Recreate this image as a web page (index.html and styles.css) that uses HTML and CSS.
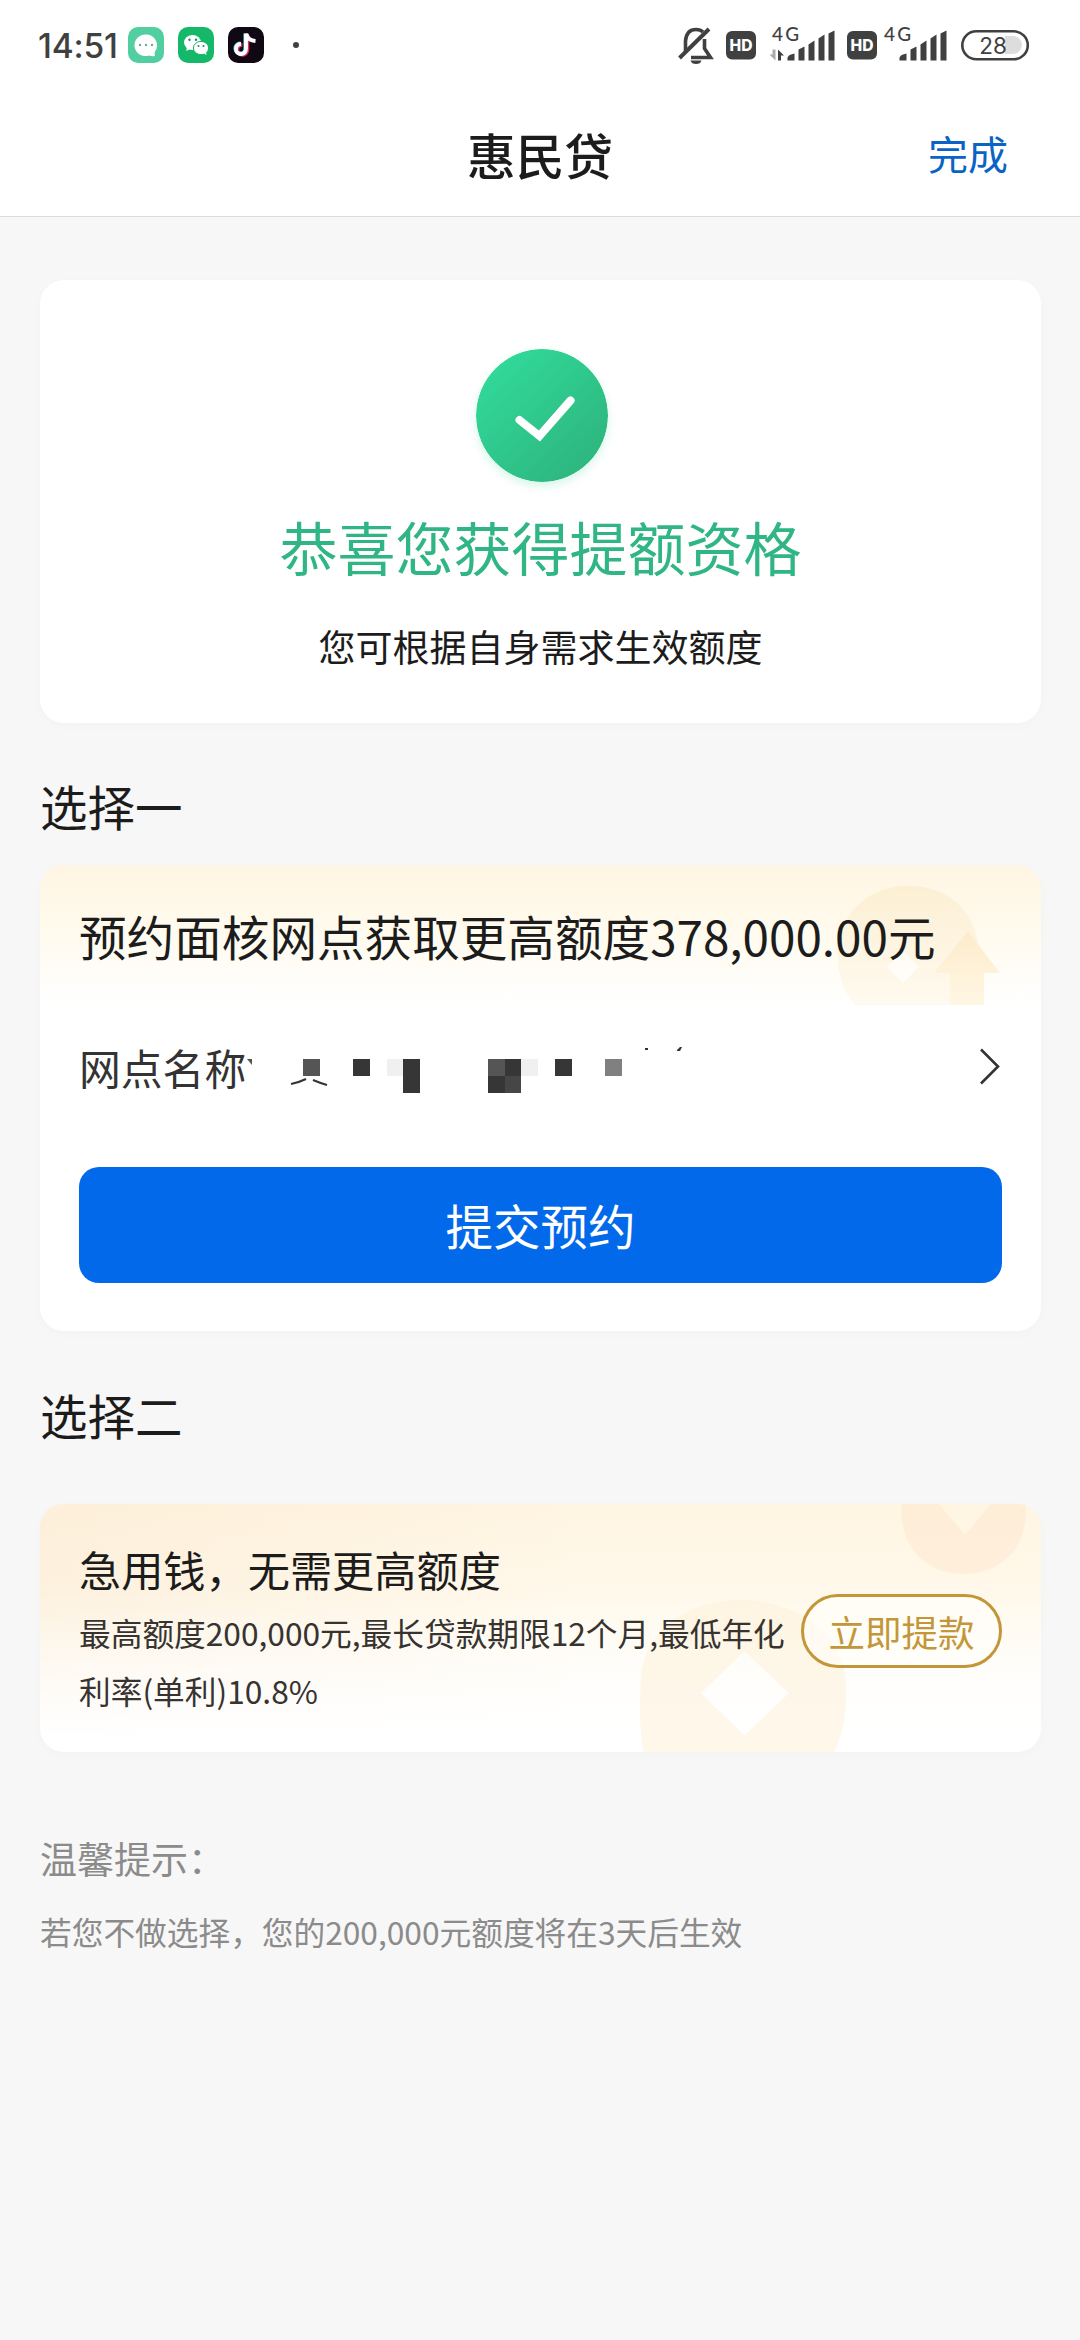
FILE: index.html
```html
<!DOCTYPE html>
<html lang="zh-CN">
<head>
<meta charset="utf-8">
<title>惠民贷</title>
<link rel="stylesheet" href="styles.css">
</head>
<body>
<div class="status">
  <span class="time">14:51</span>
  <svg class="app" viewBox="0 0 36 36"><rect width="36" height="36" rx="10" fill="#51cfa0"/><path d="M18 7.500a11 10.800 0 1 0 3 21q3 1 6 .5q-.8-2.500 0-4.500A11 10.800 0 0 0 18 7.500Z" fill="#fff"/><g fill="#6cab92"><circle cx="12" cy="18" r="1.200"/><circle cx="18" cy="18" r="1.200"/><circle cx="24" cy="18" r="1.200"/></g></svg>
  <svg class="app" viewBox="0 0 36 36"><rect width="36" height="36" rx="10" fill="#14b868"/><ellipse cx="14.500" cy="15.500" rx="8.500" ry="7.500" fill="#fff"/><path d="M9 20l-.8 4 4-2z" fill="#fff"/><ellipse cx="23" cy="21" rx="7.600" ry="6.600" fill="#fff" stroke="#14b868" stroke-width="1"/><path d="M25 26l3.500 2-.5-3.500z" fill="#fff"/><g fill="#14905a"><circle cx="11.500" cy="12.800" r="1.200"/><circle cx="18" cy="12.800" r="1.200"/><circle cx="20.500" cy="19" r="1"/><circle cx="25.500" cy="19" r="1"/></g></svg>
  <svg class="app" viewBox="0 0 36 36"><rect width="36" height="36" rx="10" fill="#100812"/><g fill="none" stroke-width="3.800"><path d="M18.500 7v15a5 5 0 1 1-5-5" stroke="#e72b62" transform="translate(.9 .8)"/><path d="M18 7v15a5 5 0 1 1-5-5" stroke="#6be9ef" transform="translate(-.6 -.5)"/><path d="M18 6.500v15.500a5 5 0 1 1-5-5M18.500 7q1.500 6.500 9 7" stroke="#fff"/></g></svg>
  <i class="more"></i>
  <svg class="sysicons" viewBox="0 0 360 48">
    <g fill="none" stroke="#404040">
      <path d="M11.500 32V20Q12.500 8.500 22 8.500q4.500 0 7 2.500M30.500 18v9.500l6 9H17" stroke-width="3.600"/>
      <path d="M5.500 37L35 8" stroke-width="4"/>
    </g>
    <path d="M16.500 39.500h11q-1 3.500-5.500 3.500t-5.500-3.500z" fill="#404040"/>
    <g fill="#404040" transform="translate(-1.500 1.500)">
      <rect x="53.500" y="8.500" width="30" height="28.500" rx="6"/>
      <rect x="174.500" y="8.500" width="30" height="28.500" rx="6"/>
      <path d="M115 38v-3q1-3 7-4v7zM126 38V27l6-3v14zM136 38V22l6-4v20zM146 38V16l6-4v26zM156 38V11l6-3v30z"/>
      <path d="M227 38v-3q1-3 7-4v7zM238 38V27l6-3v14zM248 38V22l6-4v20zM258 38V16l6-4v26zM268 38V11l6-3v30z"/>
      <path d="M105.500 38V27l6 6h-3v5z"/>
      <path d="M103 27v11l-6-6h3v-5z" fill="#aaa"/>
    </g>
    <g class="hd"><text x="67" y="30" textLength="23" lengthAdjust="spacingAndGlyphs">HD</text><text x="188" y="30" textLength="23" lengthAdjust="spacingAndGlyphs">HD</text></g>
    <g class="net"><text x="98" y="20" textLength="27">4G</text><text x="210" y="20" textLength="27">4G</text></g>
    <path d="M331 15h8a9 9 0 0 1 0 18h-8z" fill="#ddd"/>
    <rect x="288.300" y="10.300" width="65.500" height="28" rx="14" fill="none" stroke="#404040" stroke-width="2.600"/>
    <text class="pct" x="319" y="32.500">28</text>
  </svg>
</div>
<header class="nav"><span></span><h1>惠民贷</h1><a class="done">完成</a></header>
<main>
  <section class="card result">
    <svg class="tick" viewBox="0 0 132 133"><defs><linearGradient id="g" x1=".15" y1=".1" x2=".8" y2=".8"><stop offset="0" stop-color="#31d998"/><stop offset="1" stop-color="#2eb981"/></linearGradient></defs><ellipse cx="66" cy="66.500" rx="66" ry="66.500" fill="url(#g)"/><path d="M43.500 71L63.500 87L94.500 51.500" fill="none" stroke="#fff" stroke-width="8" stroke-linecap="round"/></svg>
    <h2>恭喜您获得提额资格</h2>
    <p>您可根据自身需求生效额度</p>
  </section>
  <h3 class="label">选择一</h3>
  <section class="card book">
    <svg class="deco" viewBox="0 0 1000 140"><defs><linearGradient id="coin" x1="0" y1="0" x2="0" y2="1"><stop offset="0" stop-color="#fcefd3"/><stop offset="1" stop-color="#fffaf0"/></linearGradient><linearGradient id="up" x1="0" y1="0" x2="0" y2="1"><stop offset="0" stop-color="#fdeccb"/><stop offset="1" stop-color="#fff6e4"/></linearGradient></defs><path fill-rule="evenodd" fill="url(#coin)" d="M868 21c42 0 70 28 70 70q0 28-10 49h-114q-17-21-17-49c0-42 29-70 71-70zM862 86l-16 16 16 16 16-16z"/><path d="M927 66l32 42h-16v32h-34v-32h-16z" fill="url(#up)"/></svg>
    <h2>预约面核网点获取更高额度378,000.00元</h2>
    <div class="row"><span>网点名称</span>
      <svg class="masked" viewBox="0 0 450 60">
        <path d="M2 22h5v6z" fill="#555"/>
        <path d="M46 47q9-2 15-5M68 43q7 3 14 5" fill="none" stroke="#333" stroke-width="2"/>
        <path d="M142 22h16v17h-16zM276 22h17v17h-17z" fill="#f0f0f0"/>
        <path d="M58 22h17v17H58zM243 22h17v17h-17z" fill="#555"/>
        <path d="M108 22h17v17h-17zM158 22h17v34h-17zM260 22h16v17h-16zM243 39h17v17h-17zM310 22h17v17h-17z" fill="#363636"/>
        <path d="M260 39h16v17h-16z" fill="#464646"/>
        <path d="M360 22h17v17h-17z" fill="#808080"/>
        <path d="M400 11h3v2h-3zM432 13l3-3h2l-2 4h-3z" fill="#333"/>
      </svg>
      <svg class="arrow" viewBox="0 0 24 40"><path d="M3 2.500L20 19.500 3 36.500" fill="none" stroke="#333" stroke-width="2.600"/></svg>
    </div>
    <button class="primary">提交预约</button>
  </section>
  <h3 class="label second">选择二</h3>
  <section class="card urgent">
    <svg class="deco" viewBox="0 0 1000 248"><path fill-rule="evenodd" fill="#fdf0d8" opacity=".55" d="M603 248q-5-25-3-70c2-50 45-82 100-82s102 32 105 82q2 45-12 70zM704 147l-44 42 44 42 44-42z"/><path fill-rule="evenodd" fill="#fde8d0" opacity=".55" d="M861 0h124q1 30-12 47-20 23-50 23-32 0-50-23-14-18-12-47zM898 0l26 31 26-31z"/></svg>
    <div class="info"><h4>急用钱，无需更高额度</h4><p>最高额度200,000元,最长贷款期限12个月,最低年化<br>利率(单利)10.8%</p></div>
    <button class="ghost">立即提款</button>
  </section>
  <footer><p class="tip">温馨提示：</p><p class="note">若您不做选择，您的200,000元额度将在3天后生效</p></footer>
</main>
</body>
</html>
```
FILE: styles.css
```css
* { box-sizing: border-box; }
body { margin: 0; width: 1080px; height: 2340px; overflow: hidden; background: #f7f7f7; color: #1c1c1c; font-family: "Noto Sans CJK SC", sans-serif; }
h1, h2, h3, h4, p { margin: 0; font-weight: 400; white-space: nowrap; }
button { border: 0; padding: 0; font-family: inherit; }
svg { display: block; flex: none; }
.status { height: 90px; padding: 0 46px 0 38px; display: flex; align-items: center; background: #fff; }
.time { width: 90px; padding-top: 2px; font: 500 33.500px/40px Inter, sans-serif; color: #404040; letter-spacing: -.2px; white-space: nowrap; }
.app { width: 36px; height: 36px; margin-right: 14px; }
.more { width: 6px; height: 6px; margin-left: 15px; border-radius: 50%; background: #404040; }
.sysicons { width: 360px; height: 48px; margin-left: auto; }
.hd { fill: #fff; font: 800 16px Inter, sans-serif; text-anchor: middle; }
.net { fill: #404040; font: 500 19px Lato, sans-serif; }
.pct { fill: #404040; font: 400 22.500px Inter, sans-serif; text-anchor: middle; }
.nav { height: 127px; display: grid; grid-template-columns: 1fr auto 1fr; align-items: center; background: #fff; border-bottom: 1px solid #d9dcdc; }
.nav h1 { font-size: 48.700px; line-height: 60px; margin-top: 1px; font-weight: 500; }
.done { justify-self: end; margin-right: 72px; font-size: 40px; line-height: 60px; color: #0b63c5; }
main { padding: 63px 39px 0 40px; }
.card { position: relative; width: 1001px; border-radius: 24px; background: #fff; box-shadow: 0 3px 12px rgba(0, 0, 0, .018); overflow: hidden; }
.result { height: 443px; padding-top: 69px; display: flex; flex-direction: column; align-items: center; }
.tick { width: 132px; height: 133px; margin-left: 3px; border-radius: 50%; box-shadow: 0 4px 10px rgba(45, 210, 145, .2); }
.result h2 { font-size: 58px; line-height: 80px; margin-top: 24px; color: #30b685; }
.result p { font-size: 37px; line-height: 54px; margin-top: 33px; }
.label { height: 70px; margin-top: 48px; font-size: 47.500px; line-height: 70px; }
.book { height: 466px; margin-top: 24px; padding: 0 39px; background: linear-gradient(#fff5e3, #fffaec 60px, #fff 140px); }
.deco { position: absolute; left: 0; top: 0; width: 100%; }
.book h2 { position: relative; padding-top: 36px; font-size: 47.600px; line-height: 70px; }
.row { height: 60px; margin-top: 66px; display: flex; align-items: center; font-size: 41.800px; line-height: 60px; color: #333; }
.row span { width: 166px; white-space: nowrap; }
.masked { width: 450px; height: 60px; }
.arrow { width: 24px; height: 40px; margin-left: auto; }
.primary { display: block; width: 923px; height: 116px; margin-top: 70px; border-radius: 20px; background: #0369eb; color: #fff; font-size: 47.500px; line-height: 116px; }
.second { margin-top: 49px; }
.urgent { height: 248px; margin-top: 54px; padding: 0 39px; display: flex; justify-content: space-between; background: linear-gradient(90deg, rgba(250, 230, 204, .4), rgba(255, 248, 230, 0) 55%), linear-gradient(#fff5e2, #fffaee 50%, #fff); }
.urgent::before { content: ""; position: absolute; inset: 0; background: linear-gradient(rgba(255, 255, 255, 0) 35%, #fff 95%); }
.info, .ghost { position: relative; }
.info { width: 720px; padding-top: 35px; }
.info h4 { font-size: 42.200px; line-height: 60px; }
.info p { font-size: 31.700px; line-height: 58px; margin-top: 4px; color: #373330; }
.ghost { width: 201px; height: 74px; margin-top: 90px; padding-top: 2px; border: 3px solid #c4963a; border-radius: 37px; background: rgba(255, 255, 250, .6); color: #c4963a; font-size: 36.500px; line-height: 66px; }
footer { margin-top: 78px; color: #8b8b8b; }
.tip { font-size: 37px; line-height: 56px; }
.note { font-size: 31.700px; line-height: 50px; margin-top: 20px; }
```
